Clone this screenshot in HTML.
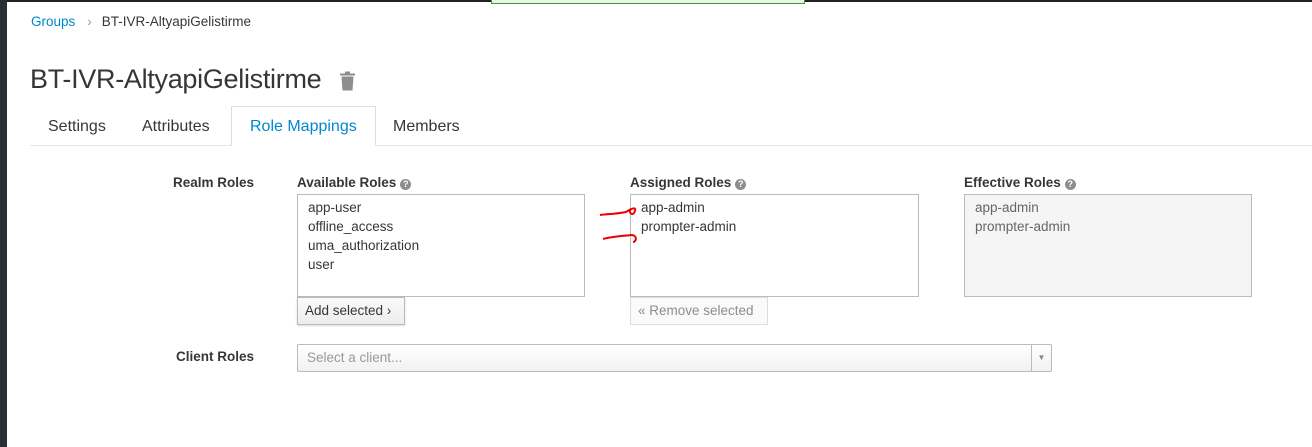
<!DOCTYPE html>
<html><head><meta charset="utf-8"><style>
*{box-sizing:border-box;margin:0;padding:0}
body{width:1312px;height:447px;background:#fff;font-family:"Liberation Sans",sans-serif;color:#363636;position:relative;overflow:hidden;font-size:13px}
.a{position:absolute;white-space:nowrap}
.box{position:absolute;border:1px solid #bbb;background:#fff;padding:4px 10px;font-size:13.5px;line-height:19px;color:#363636}
.q{display:inline-block;width:11px;height:11px;border-radius:50%;background:#8b8d8f;color:#fff;font-size:9px;line-height:11px;text-align:center;font-weight:bold;vertical-align:0px;margin-left:4px}
.lbl{font-weight:bold;font-size:13.5px;color:#363636}
</style></head><body>
<div class="a" style="left:0;top:0;width:1312px;height:2px;background:#222"></div>
<div class="a" style="left:0;top:0;width:7px;height:447px;background:#2b2f35"></div>
<div class="a" style="left:491px;top:0;width:314px;height:4px;border:1px solid #3f9c35;border-top:none;background:#e9f4e6"></div>
<div class="a" style="left:31px;top:14px;font-size:13.5px"><span style="color:#0088ce">Groups</span><span style="color:#999;margin:0 10px 0 12px">›</span><span style="color:#363636">BT-IVR-AltyapiGelistirme</span></div>
<div class="a" style="left:30px;top:64px;font-size:27px;color:#363636;letter-spacing:-0.3px">BT-IVR-AltyapiGelistirme</div>
<svg class="a" style="left:339px;top:71px" width="17" height="20" viewBox="0 0 17 20"><rect x="1" y="2.5" width="15" height="2" fill="#8b8d8f"/><rect x="6" y="0.5" width="5" height="2" fill="#8b8d8f"/><path d="M2.5 5.5h12l-1 14h-10z" fill="#8b8d8f"/></svg>
<div class="a" style="left:30px;top:145px;width:1282px;height:1px;background:#e5e5e5"></div>
<div class="a" style="left:231px;top:106px;width:145px;height:40px;border:1px solid #ddd;border-bottom:1px solid #fff;background:#fff"></div>
<div class="a" style="left:48px;top:118px;font-size:16px;color:#363636">Settings</div>
<div class="a" style="left:142px;top:118px;font-size:16px;color:#363636">Attributes</div>
<div class="a" style="left:250px;top:118px;font-size:16px;color:#0088ce">Role Mappings</div>
<div class="a" style="left:393px;top:118px;font-size:16px;color:#363636">Members</div>
<div class="a lbl" style="left:173px;top:175px">Realm Roles</div>
<div class="a lbl" style="left:297px;top:175px">Available Roles<span class="q">?</span></div>
<div class="a lbl" style="left:630px;top:175px">Assigned Roles<span class="q">?</span></div>
<div class="a lbl" style="left:964px;top:175px">Effective Roles<span class="q">?</span></div>
<div class="box" style="left:297px;top:194px;width:288px;height:103px;padding-top:3px">app-user<br>offline_access<br>uma_authorization<br>user</div>
<div class="box" style="left:630px;top:194px;width:289px;height:103px;padding-top:3px">app-admin<br>prompter-admin</div>
<div class="box" style="left:964px;top:194px;width:288px;height:103px;background:#f5f5f5;color:#666;padding-top:3px">app-admin<br>prompter-admin</div>
<div class="a" style="left:297px;top:297px;width:108px;height:28px;border:1px solid #bbb;background:linear-gradient(#fafafa,#ededed);font-size:13.5px;line-height:26px;padding-left:7px;color:#363636;box-shadow:0 1px 2px rgba(0,0,0,.15)">Add selected ›</div>
<div class="a" style="left:630px;top:297px;width:138px;height:28px;border:1px solid #ddd;background:#fafafa;font-size:13.5px;line-height:26px;padding-left:7px;color:#8b8d8f">« Remove selected</div>
<svg class="a" style="left:598px;top:198px" width="46" height="48" viewBox="0 0 46 48"><path d="M2 17 C10 16 18 16 28 14 C34 10 40 8 36 15 C34 18 30 14 33 11" stroke="#e00" stroke-width="2" fill="none"/><path d="M5 41 C12 39 22 38 34 37 C40 38 38 44 35 44" stroke="#e00" stroke-width="2" fill="none"/></svg>
<div class="a lbl" style="left:176px;top:349px">Client Roles</div>
<div class="a" style="left:297px;top:344px;width:755px;height:28px;border:1px solid #bbb;border-radius:2px;background:linear-gradient(#fff,#f1f1f1)"><span style="position:absolute;left:9px;top:5px;font-size:13.5px;color:#999">Select a client...</span><span style="position:absolute;right:0;top:0;width:20px;height:26px;border-left:1px solid #bbb;text-align:center;font-size:8px;line-height:26px;color:#888">▼</span></div>
</body></html>
